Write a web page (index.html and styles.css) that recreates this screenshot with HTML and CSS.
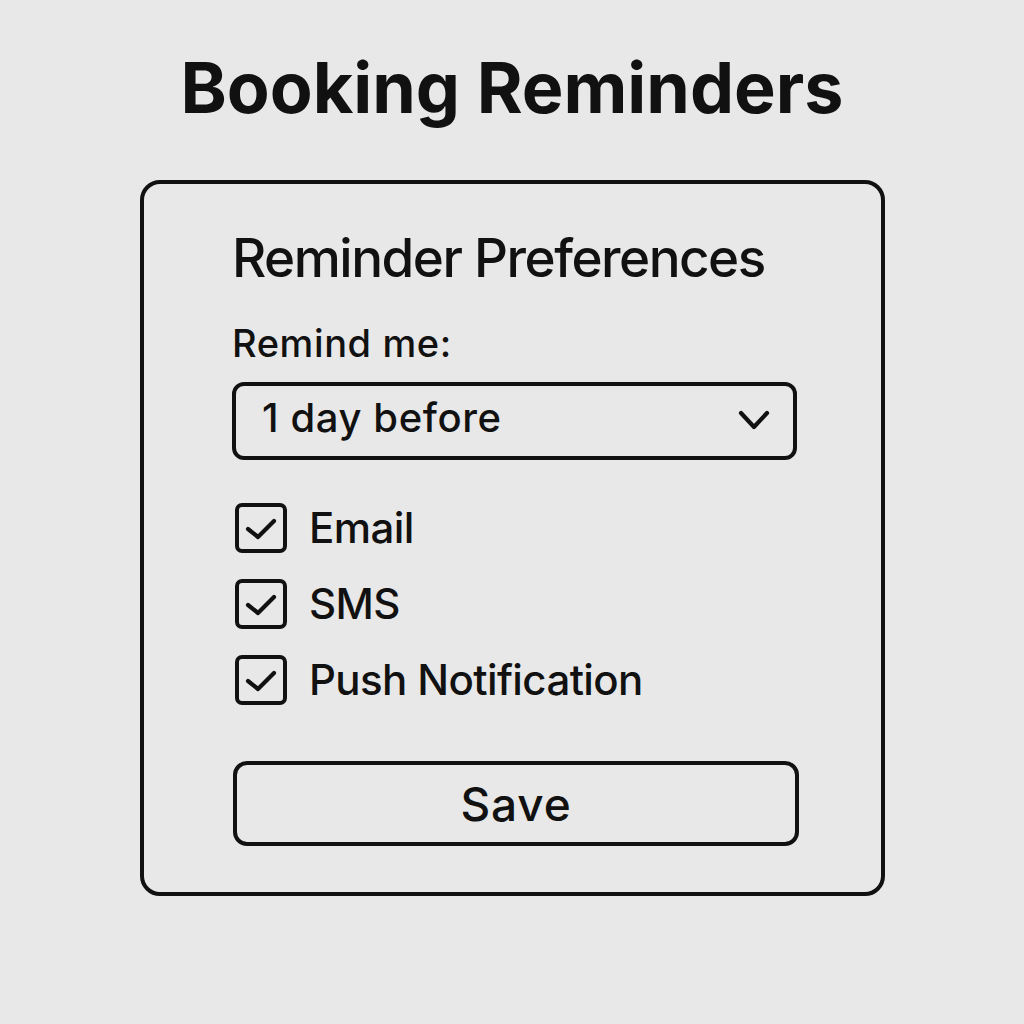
FILE: index.html
```html
<!DOCTYPE html>
<html lang="en">
<head>
    <meta charset="UTF-8">
    <title>Booking Reminders</title>
    <link rel="stylesheet" href="styles.css">
</head>
<body>
    <h1 class="page-title">Booking Reminders</h1>
    <div class="card">
        <h2 class="card-title">Reminder Preferences</h2>
        <label class="field-label" for="when">Remind me:</label>
        <div class="select" id="when">
            <span class="select-value">1 day before</span>
            <svg class="chevron" width="32" height="22" viewBox="0 0 32 22">
                <path d="M3 4 L16 18 L29 4" fill="none" stroke="#111" stroke-width="4.2" stroke-linecap="round" stroke-linejoin="round"/>
            </svg>
        </div>
        <div class="options">
            <div class="option">
                <span class="box">
                    <svg width="44" height="42" viewBox="0 0 44 42"><path d="M9 22 L19 30 L35 14" fill="none" stroke="#111" stroke-width="4.2" stroke-linecap="round" stroke-linejoin="round"/></svg>
                </span>
                <span class="option-text">Email</span>
            </div>
            <div class="option">
                <span class="box">
                    <svg width="44" height="42" viewBox="0 0 44 42"><path d="M9 22 L19 30 L35 14" fill="none" stroke="#111" stroke-width="4.2" stroke-linecap="round" stroke-linejoin="round"/></svg>
                </span>
                <span class="option-text">SMS</span>
            </div>
            <div class="option">
                <span class="box">
                    <svg width="44" height="42" viewBox="0 0 44 42"><path d="M9 22 L19 30 L35 14" fill="none" stroke="#111" stroke-width="4.2" stroke-linecap="round" stroke-linejoin="round"/></svg>
                </span>
                <span class="option-text">Push Notification</span>
            </div>
        </div>
        <button class="save-btn" type="button">Save</button>
    </div>
</body>
</html>
```

FILE: styles.css
```css
/* Basic Styling */
body {
    font-family: Inter, "Noto Sans", sans-serif;
    background-color: #e8e8e8;
    color: #111;
    margin: 0;
    padding: 0;
}

.page-title {
    margin: 0;
    padding-top: 45px;
    text-align: center;
    font-size: 70px;
    font-weight: 700;
    line-height: 85px;
}

.card {
    box-sizing: border-box;
    width: 745px;
    height: 716px;
    margin: 50px 0 0 140px;
    padding: 42px 84px 0 88px;
    border: 4px solid #111;
    border-radius: 20px;
}

.card-title {
    margin: 0;
    font-size: 53px;
    font-weight: 500;
    line-height: 64px;
    letter-spacing: -1.5px;
}

.field-label {
    display: block;
    margin-top: 30px;
    font-size: 38px;
    font-weight: 500;
    line-height: 46px;
    letter-spacing: 0.6px;
}

.select {
    box-sizing: border-box;
    display: flex;
    justify-content: space-between;
    align-items: center;
    height: 78px;
    margin-top: 16px;
    padding: 0 23px 0 26px;
    border: 4px solid #111;
    border-radius: 12px;
}

.select-value {
    font-size: 40px;
    font-weight: 500;
    line-height: 48px;
    letter-spacing: 0.6px;
    padding-bottom: 6px;
}

.chevron {
    margin-top: -2px;
}

.options {
    display: flex;
    flex-direction: column;
    gap: 26px;
    margin-top: 43px;
}

.option {
    display: flex;
    align-items: center;
    gap: 22px;
    height: 50px;
}

.box {
    box-sizing: border-box;
    display: flex;
    width: 52px;
    height: 50px;
    margin-left: 3px;
    border: 4px solid #111;
    border-radius: 7px;
}

.option-text {
    font-size: 42px;
    font-weight: 500;
    line-height: 50px;
    letter-spacing: -0.6px;
}

.save-btn {
    box-sizing: border-box;
    display: block;
    width: 566px;
    height: 85px;
    margin: 56px 0 0 1px;
    border: 4px solid #111;
    border-radius: 14px;
    background: transparent;
    color: #111;
    font-family: Inter, "Noto Sans", sans-serif;
    font-size: 46px;
    font-weight: 500;
    line-height: 1;
    letter-spacing: 0.8px;
}
```
